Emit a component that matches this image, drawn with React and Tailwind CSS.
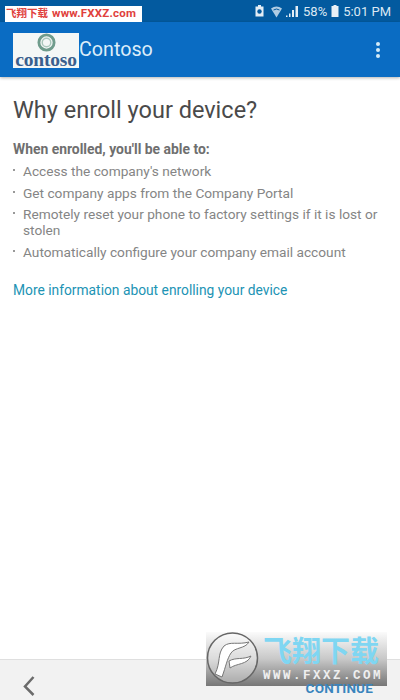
import React from "react";

const font = { fontFamily: '"Roboto", "Noto Sans CJK SC", sans-serif' };

function StatusBar() {
  return (
    <div className="h-[22px] bg-[#035a9f] flex items-center justify-end pr-[9px] text-[13px] leading-none text-[#dbe8f3]">
      <svg width="9" height="12" viewBox="0 0 9 12" className="mr-[7px]">
        <path d="M0.500 1.500h8v10h-8z M3 0h3v1.500H3z" fill="#e4edf5" />
        <circle cx="4.500" cy="6.500" r="2.200" fill="#035a9f" />
      </svg>
      <svg width="11" height="13" viewBox="0 0 11 13" className="mr-[4px]">
        <path d="M0 3.500Q5.500 -0.500 11 3.500L5.500 12.500Z" fill="#cfe0ee" opacity="0.85" />
        <path d="M2.500 5Q5.500 3 8.500 5" stroke="#035a9f" strokeWidth="1" fill="none" />
      </svg>
      <svg width="12" height="12" viewBox="0 0 12 12" className="mr-[5px]">
        <path d="M0 10.500h1.500V12H0zM3 8.500h1.500V12H3zM6 5h2v7H6zM9.500 1H12v11H9.500z" fill="#e4edf5" />
      </svg>
      <span>58%</span>
      <svg width="8" height="12" viewBox="0 0 8 12" className="mx-[4px]">
        <path d="M2.500 0h3v1h2v11H.5V1h2z" fill="#e8eff6" />
      </svg>
      <span>5:01 PM</span>
    </div>
  );
}

function Logo() {
  return (
    <div className="w-[66px] h-[35px] bg-[#f4f7f6] flex flex-col items-center overflow-hidden shrink-0 mt-[1px]">
      <svg width="19" height="19" viewBox="0 0 20 20" className="shrink-0">
        <circle cx="10" cy="10" r="8" fill="none" stroke="#6f9c8c" strokeWidth="3" />
        <circle cx="10" cy="10" r="4.500" fill="none" stroke="#a9c7bb" strokeWidth="1.500" />
      </svg>
      <span className="text-[19.500px] leading-[16px] font-bold tracking-[-0.2px] text-[#3a5f8e]" style={{ fontFamily: '"Liberation Serif", serif' }}>
        contoso
      </span>
    </div>
  );
}

function Header() {
  return (
    <div className="h-[55px] bg-[#0a6cc3] flex items-center pl-[13px] pr-[20px] shadow-[0_1px_3px_rgba(0,0,0,0.3)] relative">
      <Logo />
      <span className="text-[19.700px] text-[#dcedf9] flex-1">Contoso</span>
      <div className="flex flex-col gap-[2px]">
        <span className="w-[4px] h-[4px] rounded-full bg-[#d4ebf7]" />
        <span className="w-[4px] h-[4px] rounded-full bg-[#d4ebf7]" />
        <span className="w-[4px] h-[4px] rounded-full bg-[#d4ebf7]" />
      </div>
    </div>
  );
}

const items = [
  "Access the company's network",
  "Get company apps from the Company Portal",
  "Remotely reset your phone to factory settings if it is lost or stolen",
  "Automatically configure your company email account",
];

function Content() {
  return (
    <div className="flex-1 bg-white px-[13px] pt-[19px]">
      <h1 className="text-[23.500px] leading-[28px] text-[#4a4a4a]">Why enroll your device?</h1>
      <p className="mt-[16px] text-[13.900px] leading-[18px] font-bold text-[#6f6f6f]">When enrolled, you'll be able to:</p>
      <ul className="mt-[5px] flex flex-col gap-[5.500px] text-[13.700px] leading-[16px] text-[#858585] pr-[6px]">
        {items.map((t) => (
          <li key={t} className="flex">
            <span className="w-[10px] shrink-0 flex pt-[6px]">
              <span className="w-[2px] h-[2px] bg-[#777777] rounded-full" />
            </span>
            <span>{t}</span>
          </li>
        ))}
      </ul>
      <a className="block mt-[21px] text-[13.800px] leading-[18px] text-[#2193b4]">More information about enrolling your device</a>
    </div>
  );
}

function Footer() {
  return (
    <div className="h-[41px] bg-[#f2f2f2] border-t border-[#dfdfdf] flex items-start justify-between pl-[22px] pr-[27px]">
      <svg width="14" height="24" viewBox="0 0 14 24" className="mt-[14px]">
        <path d="M11.500 3L3 12.500L11.500 21" fill="none" stroke="#6b6b6b" strokeWidth="2.500" />
      </svg>
      <span className="relative z-10 mt-[20px] text-[13.500px] leading-[16px] font-bold text-[#3a85bd] tracking-[0.2px]">CONTINUE</span>
    </div>
  );
}

function Watermarks() {
  return (
    <>
      <div className="absolute left-[5px] top-[6px] w-[137px] h-[16px] bg-white flex items-center pl-[1px] gap-[4px] leading-none font-bold text-[#e0403c] whitespace-nowrap">
        <span className="text-[10.500px]">飞翔下载</span>
        <span className="text-[11.500px] tracking-[0.2px]">www.FXXZ.com</span>
      </div>
      <div className="absolute left-[206px] top-[632px] w-[181px] h-[54px] bg-gradient-to-b from-[#fbfbfb] via-[#c8c8c8] to-[#777777] flex">
        <svg width="54" height="54" viewBox="0 0 54 54" className="shrink-0">
          <circle cx="26.500" cy="26" r="25" fill="#ffffff" fillOpacity="0.35" stroke="#666666" strokeWidth="1.500" />
          <path d="M9 42C15 30 11 22 18 14C24 9 32 13 43 10C39 17 29 15 25 21C21 27 20 34 16 45Z" fill="#ffffff" stroke="#777777" strokeWidth="1" />
          <path d="M23 29C30 25 37 28 45 24C41 33 31 31 24 36Z" fill="#ffffff" stroke="#777777" strokeWidth="1" />
        </svg>
        <div className="flex flex-col items-start pl-[3px]">
          <span className="text-[29px] leading-[29px] font-bold text-[#7fd6f2] whitespace-nowrap mt-[6px]">飞翔下载</span>
          <span className="text-[12.500px] leading-[13px] font-bold text-[#efefef] tracking-[2.500px] whitespace-nowrap mt-[3px]" style={{ fontFamily: '"Liberation Mono", monospace' }}>WWW.FXXZ.COM</span>
        </div>
      </div>
    </>
  );
}

export default function App() {
  return (
    <div className="relative w-[400px] h-[700px] flex flex-col overflow-hidden bg-white" style={font}>
      <StatusBar />
      <Header />
      <Content />
      <Footer />
      <Watermarks />
    </div>
  );
}
